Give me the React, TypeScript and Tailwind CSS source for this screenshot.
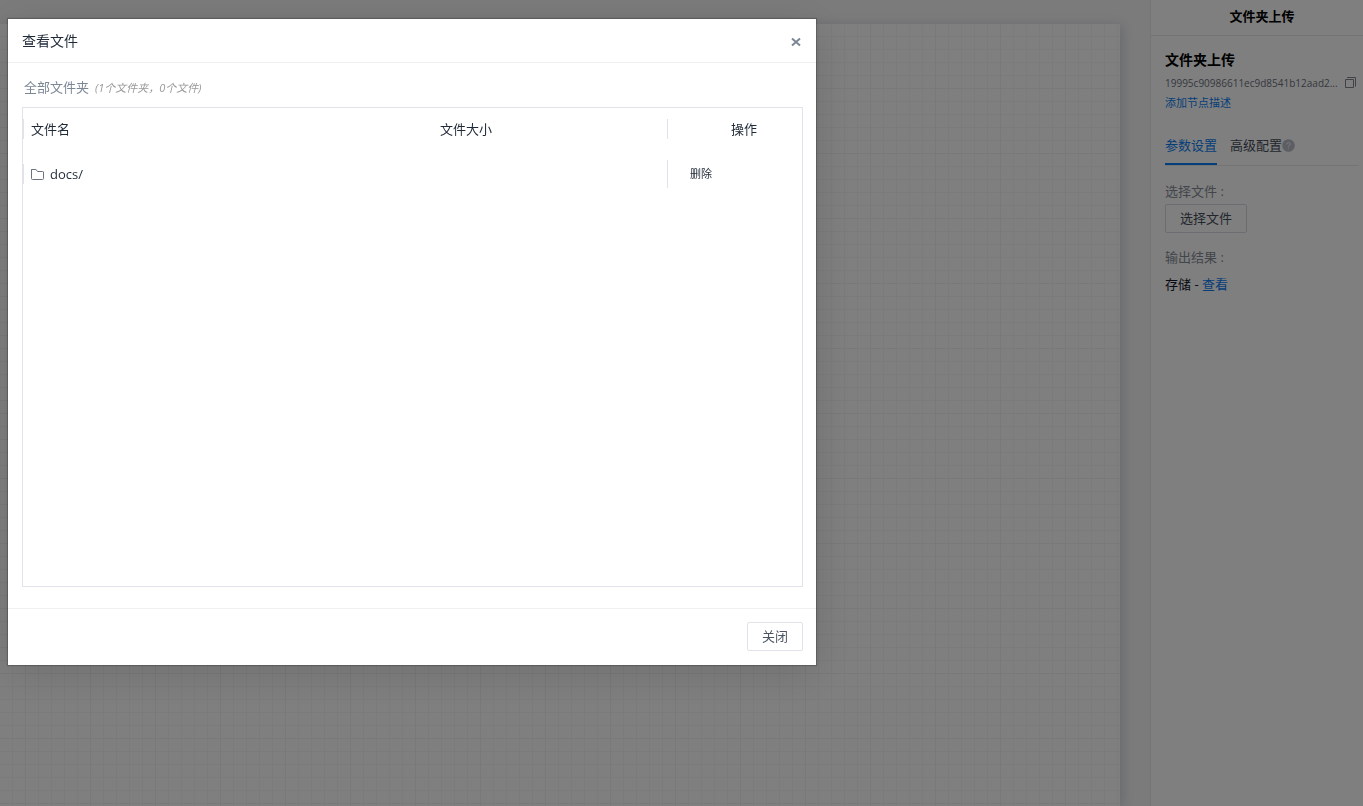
import { useState } from "react";

const files = [{ name: "docs/", size: "" }];

function FolderIcon() {
  return (
    <svg width="13" height="13" viewBox="0 0 13 13" fill="none" stroke="#6b7280" aria-hidden="true">
      <path d="M0.5 1.5V10.5Q0.5 11.5 1.5 11.5H11.5Q12.5 11.5 12.5 10.5V4Q12.5 3.500 11.500 3.500H6.500L5 1.500H1Q0.500 1.500 0.500 2Z" />
    </svg>
  );
}

function CopyIcon() {
  return (
    <svg width="11" height="11" viewBox="0 0 11 11" fill="none" stroke="#80858f" aria-hidden="true">
      <path d="M0.5 2.500H8.500V10.500H0.500Z" />
      <path d="M2 0.500H10.500V9.500" />
    </svg>
  );
}

function HelpIcon() {
  return (
    <svg width="13" height="13" viewBox="0 0 13 13" aria-hidden="true">
      <circle cx="6.5" cy="6.5" r="6.3" fill="#b9bcc9" />
      <path d="M4.700 5.200Q4.800 3.600 6.500 3.600T8.300 5.100Q8.300 6 6.600 6.700V7.600M6.600 8.600V9.700" fill="none" stroke="#f3f4f6" />
    </svg>
  );
}

function Sidebar() {
  return (
    <aside className="w-[213px] shrink-0 border-l border-[#ebebef] bg-white">
      <h1 className="flex h-9 items-center justify-center border-b border-[#e8e8ee] pb-[2px] pl-[10px] text-[13px] font-bold">
        文件夹上传
      </h1>
      <div className="pl-[14px] pr-1">
        <h2 className="mt-3 text-sm leading-6 font-bold">文件夹上传</h2>
        <div className="flex h-[22px] items-center justify-between pr-[3px] text-[10px] text-[#6b717c]">
          <span className="whitespace-nowrap">19995c90986611ec9d8541b12aad2...</span>
          <button type="button" aria-label="复制" className="shrink-0 pb-[2px]">
            <CopyIcon />
          </button>
        </div>
        <a href="#desc" className="block text-[11px] leading-[18px] text-[#0a7cf0]">
          添加节点描述
        </a>
        <div role="tablist" className="mt-4 flex h-[38px] items-stretch gap-[13px] border-b border-[#e8e8ee] text-[13px]">
          <button type="button" role="tab" aria-selected="true" className="border-b-2 border-[#0a7cf0] text-[#0a7cf0]">
            参数设置
          </button>
          <button type="button" role="tab" aria-selected="false" className="flex items-center border-b-2 border-transparent text-[#454d5a]">
            高级配置
            <HelpIcon />
          </button>
        </div>
        <div className="mt-[13px] text-[13px] leading-6 text-[#858b96]">选择文件 :</div>
        <button type="button" className="mt-px h-[29px] rounded-xs border border-[#d9dae2] px-[14px] text-[13px] text-[#454d5a]">
          选择文件
        </button>
        <div className="mt-3 text-[13px] leading-6 text-[#858b96]">输出结果 :</div>
        <div className="mt-[3px] text-[13px] leading-6 text-[#111827]">
          存储 -{" "}
          <a href="#view" className="text-[#0a7cf0]">
            查看
          </a>
        </div>
      </div>
    </aside>
  );
}

function FileDialog({ onClose }: { onClose: () => void }) {
  return (
    <div className="fixed inset-0 flex items-start bg-black/50 pt-[19px] pl-2">
      <section
        role="dialog"
        aria-modal="true"
        aria-labelledby="dialog-title"
        className="w-full max-w-[808px] bg-white shadow-[0_0_1px_1px_rgba(0,0,0,0.22),0_8px_40px_rgba(0,0,0,0.13)]"
      >
        <header className="flex h-11 items-center justify-between border-b border-[#f0f0f3] pr-[15px] pl-[14px]">
          <h2 id="dialog-title" className="text-sm text-[#1f2937]">
            查看文件
          </h2>
          <button type="button" aria-label="关闭窗口" onClick={onClose} className="pt-[2px]">
            <svg width="10" height="10" viewBox="0 0 10 10" fill="none" stroke="#7c8796" strokeWidth="2" aria-hidden="true">
              <path d="M1 1.500L9 8.500M9 1.500L1 8.500" />
            </svg>
          </button>
        </header>
        <div className="pr-[13px] pb-[21px] pl-[14px]">
          <p className="flex h-11 items-center gap-[6px] pt-[6px] pl-[2px]">
            <span className="text-[13px] text-[#7c8796]">全部文件夹</span>
            <span className="text-[11px] text-[#999999] italic">(1个文件夹，0个文件)</span>
          </p>
          <div className="min-h-[480px] border border-[#e2e2ea]">
            <table className="w-full table-fixed text-left text-[13px] text-[#1f2937]">
              <colgroup>
                <col className="w-[409px]" />
                <col />
                <col className="w-[135px]" />
              </colgroup>
              <thead>
                <tr className="h-[41px]">
                  <th className="p-0 font-normal">
                    <div className="border-l border-[#e2e2ea] pl-[7px] leading-5">文件名</div>
                  </th>
                  <th className="p-0 pl-2 leading-5 font-normal">文件大小</th>
                  <th className="p-0 font-normal">
                    <div className="border-l border-[#e2e2ea] pl-[18px] text-center leading-5">操作</div>
                  </th>
                </tr>
              </thead>
              <tbody>
                {files.map((file) => (
                  <tr key={file.name} className="h-[50px]">
                    <td className="p-0">
                      <div className="flex items-center gap-[6px] border-l border-[#e2e2ea] pl-[7px] leading-5">
                        <FolderIcon />
                        {file.name}
                      </div>
                    </td>
                    <td className="p-0 pl-2">{file.size}</td>
                    <td className="p-0">
                      <div className="flex h-7 items-center border-l border-[#e2e2ea] pl-[22px]">
                        <button type="button" className="text-[11px]">
                          删除
                        </button>
                      </div>
                    </td>
                  </tr>
                ))}
              </tbody>
            </table>
          </div>
        </div>
        <footer className="flex justify-end border-t border-[#f0f0f3] px-[13px] pt-[13px] pb-[14px]">
          <button type="button" onClick={onClose} className="h-[29px] rounded-xs border border-[#e2e2ea] px-[14px] text-[13px] text-[#4b5563]">
            关闭
          </button>
        </footer>
      </section>
    </div>
  );
}

export default function App() {
  const [open, setOpen] = useState(true);
  return (
    <div className="flex h-screen overflow-hidden bg-[#f7f7f8] font-['Open_Sans','Noto_Sans_CJK_SC',sans-serif]">
      <main className="flex flex-1 overflow-hidden pt-6 pr-[30px]">
        <div className="flex-1 bg-white bg-[linear-gradient(90deg,#f3f3f3_1px,transparent_1px),linear-gradient(#f3f3f3_1px,transparent_1px),linear-gradient(90deg,#f7f7f7_1px,transparent_1px),linear-gradient(#f7f7f7_1px,transparent_1px)] bg-[size:65px_65px,65px_65px,13px_13px,13px_13px] bg-[position:25px_64px,25px_64px,12px_12px,12px_12px] shadow-[2px_2px_12px_rgba(80,90,120,0.25)]" />
      </main>
      <Sidebar />
      {open && <FileDialog onClose={() => setOpen(false)} />}
    </div>
  );
}
